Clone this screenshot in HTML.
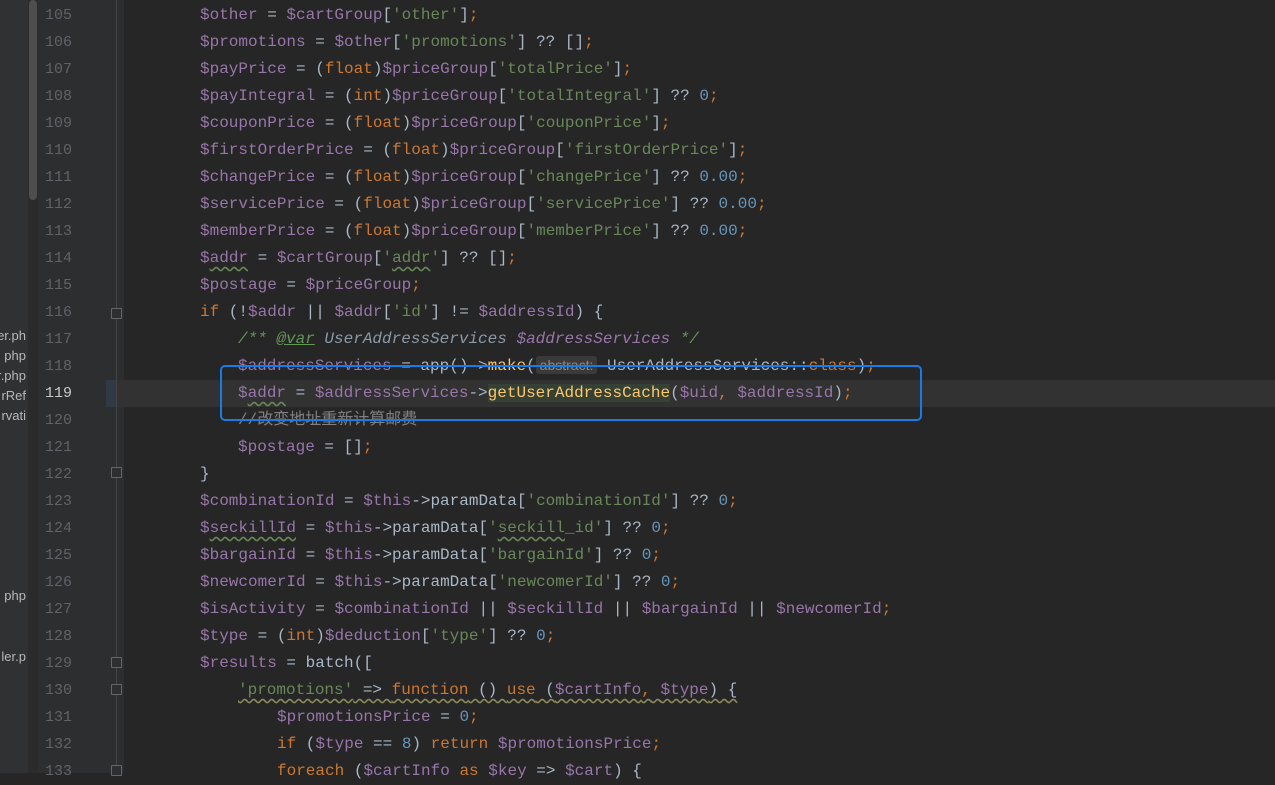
<!DOCTYPE html>
<html><head><meta charset="utf-8"><style>
*{margin:0;padding:0;box-sizing:border-box}
body{width:1275px;height:773px;overflow:hidden;background:#262626;position:relative;font-family:"Liberation Mono","Noto Sans CJK SC",monospace}
#side{position:absolute;left:0;top:0;width:28px;height:773px;background:#2f3133;overflow:hidden}
#side div{position:absolute;right:2px;font:13px "Liberation Sans",sans-serif;color:#b8b8b8;white-space:nowrap}
#sb{position:absolute;left:28px;top:0;width:10px;height:773px;background:#2b2b2b}
#sb i{position:absolute;left:1px;top:0;width:8px;height:200px;background:#4e4e4e;border-radius:4px}
#gut{position:absolute;left:38px;top:0;width:86px;height:773px;background:#2d2e30}
#sep{position:absolute;left:116px;top:0;width:1px;height:773px;background:#444}
.ln{position:absolute;left:45px;width:40px;font-size:15px;color:#5f6368;line-height:27px}
.l{position:absolute;left:0;white-space:pre;font-size:16px;line-height:27px;color:#a9b7c6}
.v{color:#9876aa}.k{color:#cc7832}.s{color:#6a8759}.n{color:#6897bb}.c{color:#808080}.d{color:#629755;font-style:italic}.f{color:#ffc66d}
.fold{position:absolute;left:111px;width:11px;height:11px;border:1px solid #666;background:#2d2e30;border-radius:1px}
.w{text-decoration:underline wavy #6a8759;text-underline-offset:4px}
</style></head><body>
<div id="side">
<div style="top:328px">er.ph</div><div style="top:348px">php</div><div style="top:368px">r.php</div><div style="top:388px">rRef</div><div style="top:408px">rvati</div><div style="top:588px">php</div><div style="top:649px">ler.p</div>
</div>
<div id="sb"><i></i></div>
<div id="gut"></div>
<div style="position:absolute;left:106px;top:380px;width:11px;height:27px;background:#2f3a44"></div>
<div style="position:absolute;left:117px;top:380px;width:1158px;height:27px;background:#323232"></div>
<div id="sep"></div>
<div id="lines"></div>
<div class="fold" style="top:308px"></div>
<div class="fold" style="top:467px"></div>
<div class="fold" style="top:657px"></div>
<div class="fold" style="top:684px"></div>
<div class="fold" style="top:765px"></div>
<div id="code">
<div class="l" style="top:2px;left:200px"><span class="v">$other</span> = <span class="v">$cartGroup</span>[<span class="s">'other'</span>]<span class="k">;</span></div>
<div class="l" style="top:29px;left:200px"><span class="v">$promotions</span> = <span class="v">$other</span>[<span class="s">'promotions'</span>] ?? []<span class="k">;</span></div>
<div class="l" style="top:56px;left:200px"><span class="v">$payPrice</span> = (<span class="k">float</span>)<span class="v">$priceGroup</span>[<span class="s">'totalPrice'</span>]<span class="k">;</span></div>
<div class="l" style="top:83px;left:200px"><span class="v">$payIntegral</span> = (<span class="k">int</span>)<span class="v">$priceGroup</span>[<span class="s">'totalIntegral'</span>] ?? <span class="n">0</span><span class="k">;</span></div>
<div class="l" style="top:110px;left:200px"><span class="v">$couponPrice</span> = (<span class="k">float</span>)<span class="v">$priceGroup</span>[<span class="s">'couponPrice'</span>]<span class="k">;</span></div>
<div class="l" style="top:137px;left:200px"><span class="v">$firstOrderPrice</span> = (<span class="k">float</span>)<span class="v">$priceGroup</span>[<span class="s">'firstOrderPrice'</span>]<span class="k">;</span></div>
<div class="l" style="top:164px;left:200px"><span class="v">$changePrice</span> = (<span class="k">float</span>)<span class="v">$priceGroup</span>[<span class="s">'changePrice'</span>] ?? <span class="n">0.00</span><span class="k">;</span></div>
<div class="l" style="top:191px;left:200px"><span class="v">$servicePrice</span> = (<span class="k">float</span>)<span class="v">$priceGroup</span>[<span class="s">'servicePrice'</span>] ?? <span class="n">0.00</span><span class="k">;</span></div>
<div class="l" style="top:218px;left:200px"><span class="v">$memberPrice</span> = (<span class="k">float</span>)<span class="v">$priceGroup</span>[<span class="s">'memberPrice'</span>] ?? <span class="n">0.00</span><span class="k">;</span></div>
<div class="l" style="top:245px;left:200px"><span class="v">$<span class="w">addr</span></span> = <span class="v">$cartGroup</span>[<span class="s">'<span class="w">addr</span>'</span>] ?? []<span class="k">;</span></div>
<div class="l" style="top:272px;left:200px"><span class="v">$postage</span> = <span class="v">$priceGroup</span><span class="k">;</span></div>
<div class="l" style="top:299px;left:200px"><span class="k">if</span> (!<span class="v">$addr</span> || <span class="v">$addr</span>[<span class="s">'id'</span>] != <span class="v">$addressId</span>) {</div>
<div class="l" style="top:326px;left:238px"><span class="d">/** <u>@var</u> <span style="color:#8a9aa8">UserAddressServices</span> <span style="color:#9876aa">$addressServices</span> */</span></div>
<div class="l" style="top:353px;left:238px"><span class="v">$addressServices</span> = app()-><span class="f">make</span>(<span style="background:#3a3a3a;color:#8a8a8a;font:14px 'Liberation Sans',sans-serif;padding:1px 4px;border-radius:3px">abstract:</span> UserAddressServices::<span class="k">class</span>)<span class="k">;</span></div>
<div class="l" style="top:380px;left:238px"><span class="v">$<span class="w">addr</span></span> = <span class="v">$addressServices</span>-><span class="f" style="background:#344134">getUserAddressCache</span>(<span class="v">$uid</span><span class="k">,</span> <span class="v">$addressId</span>)<span class="k">;</span></div>
<div class="l" style="top:407px;left:238px"><span class="c">//改变地址重新计算邮费</span></div>
<div class="l" style="top:434px;left:238px"><span class="v">$postage</span> = []<span class="k">;</span></div>
<div class="l" style="top:461px;left:200px">}</div>
<div class="l" style="top:488px;left:200px"><span class="v">$combinationId</span> = <span class="v">$this</span>->paramData[<span class="s">'combinationId'</span>] ?? <span class="n">0</span><span class="k">;</span></div>
<div class="l" style="top:515px;left:200px"><span class="v">$<span class="w">seckillId</span></span> = <span class="v">$this</span>->paramData[<span class="s">'<span class="w">seckill</span>_id'</span>] ?? <span class="n">0</span><span class="k">;</span></div>
<div class="l" style="top:542px;left:200px"><span class="v">$bargainId</span> = <span class="v">$this</span>->paramData[<span class="s">'bargainId'</span>] ?? <span class="n">0</span><span class="k">;</span></div>
<div class="l" style="top:569px;left:200px"><span class="v">$newcomerId</span> = <span class="v">$this</span>->paramData[<span class="s">'newcomerId'</span>] ?? <span class="n">0</span><span class="k">;</span></div>
<div class="l" style="top:596px;left:200px"><span class="v">$isActivity</span> = <span class="v">$combinationId</span> || <span class="v">$seckillId</span> || <span class="v">$bargainId</span> || <span class="v">$newcomerId</span><span class="k">;</span></div>
<div class="l" style="top:623px;left:200px"><span class="v">$type</span> = (<span class="k">int</span>)<span class="v">$deduction</span>[<span class="s">'type'</span>] ?? <span class="n">0</span><span class="k">;</span></div>
<div class="l" style="top:650px;left:200px"><span class="v">$results</span> = batch([</div>
<div class="l" style="top:677px;left:238px;text-decoration:underline wavy #8a8a5a;text-underline-offset:4px"><span class="s">'promotions'</span> => <span class="k">function</span> () <span class="k">use</span> (<span class="v">$cartInfo</span><span class="k">,</span> <span class="v">$type</span>) {</div>
<div class="l" style="top:704px;left:277px"><span class="v">$promotionsPrice</span> = <span class="n">0</span><span class="k">;</span></div>
<div class="l" style="top:731px;left:277px"><span class="k">if</span> (<span class="v">$type</span> == <span class="n">8</span>) <span class="k">return</span> <span class="v">$promotionsPrice</span><span class="k">;</span></div>
<div class="l" style="top:758px;left:277px"><span class="k">foreach</span> (<span class="v">$cartInfo</span> <span class="k">as</span> <span class="v">$key</span> => <span class="v">$cart</span>) {</div>
</div>
<div class="ln" style="top:2px">105</div><div class="ln" style="top:29px">106</div><div class="ln" style="top:56px">107</div><div class="ln" style="top:83px">108</div><div class="ln" style="top:110px">109</div><div class="ln" style="top:137px">110</div><div class="ln" style="top:164px">111</div><div class="ln" style="top:191px">112</div><div class="ln" style="top:218px">113</div><div class="ln" style="top:245px">114</div><div class="ln" style="top:272px">115</div><div class="ln" style="top:299px">116</div><div class="ln" style="top:326px">117</div><div class="ln" style="top:353px">118</div><div class="ln" style="top:380px;color:#c8c8c8">119</div><div class="ln" style="top:407px">120</div><div class="ln" style="top:434px">121</div><div class="ln" style="top:461px">122</div><div class="ln" style="top:488px">123</div><div class="ln" style="top:515px">124</div><div class="ln" style="top:542px">125</div><div class="ln" style="top:569px">126</div><div class="ln" style="top:596px">127</div><div class="ln" style="top:623px">128</div><div class="ln" style="top:650px">129</div><div class="ln" style="top:677px">130</div><div class="ln" style="top:704px">131</div><div class="ln" style="top:731px">132</div><div class="ln" style="top:758px">133</div>
<div style="position:absolute;left:220px;top:365px;width:702px;height:56px;border:2px solid #1a7be6;border-radius:5px"></div>
</body></html>
